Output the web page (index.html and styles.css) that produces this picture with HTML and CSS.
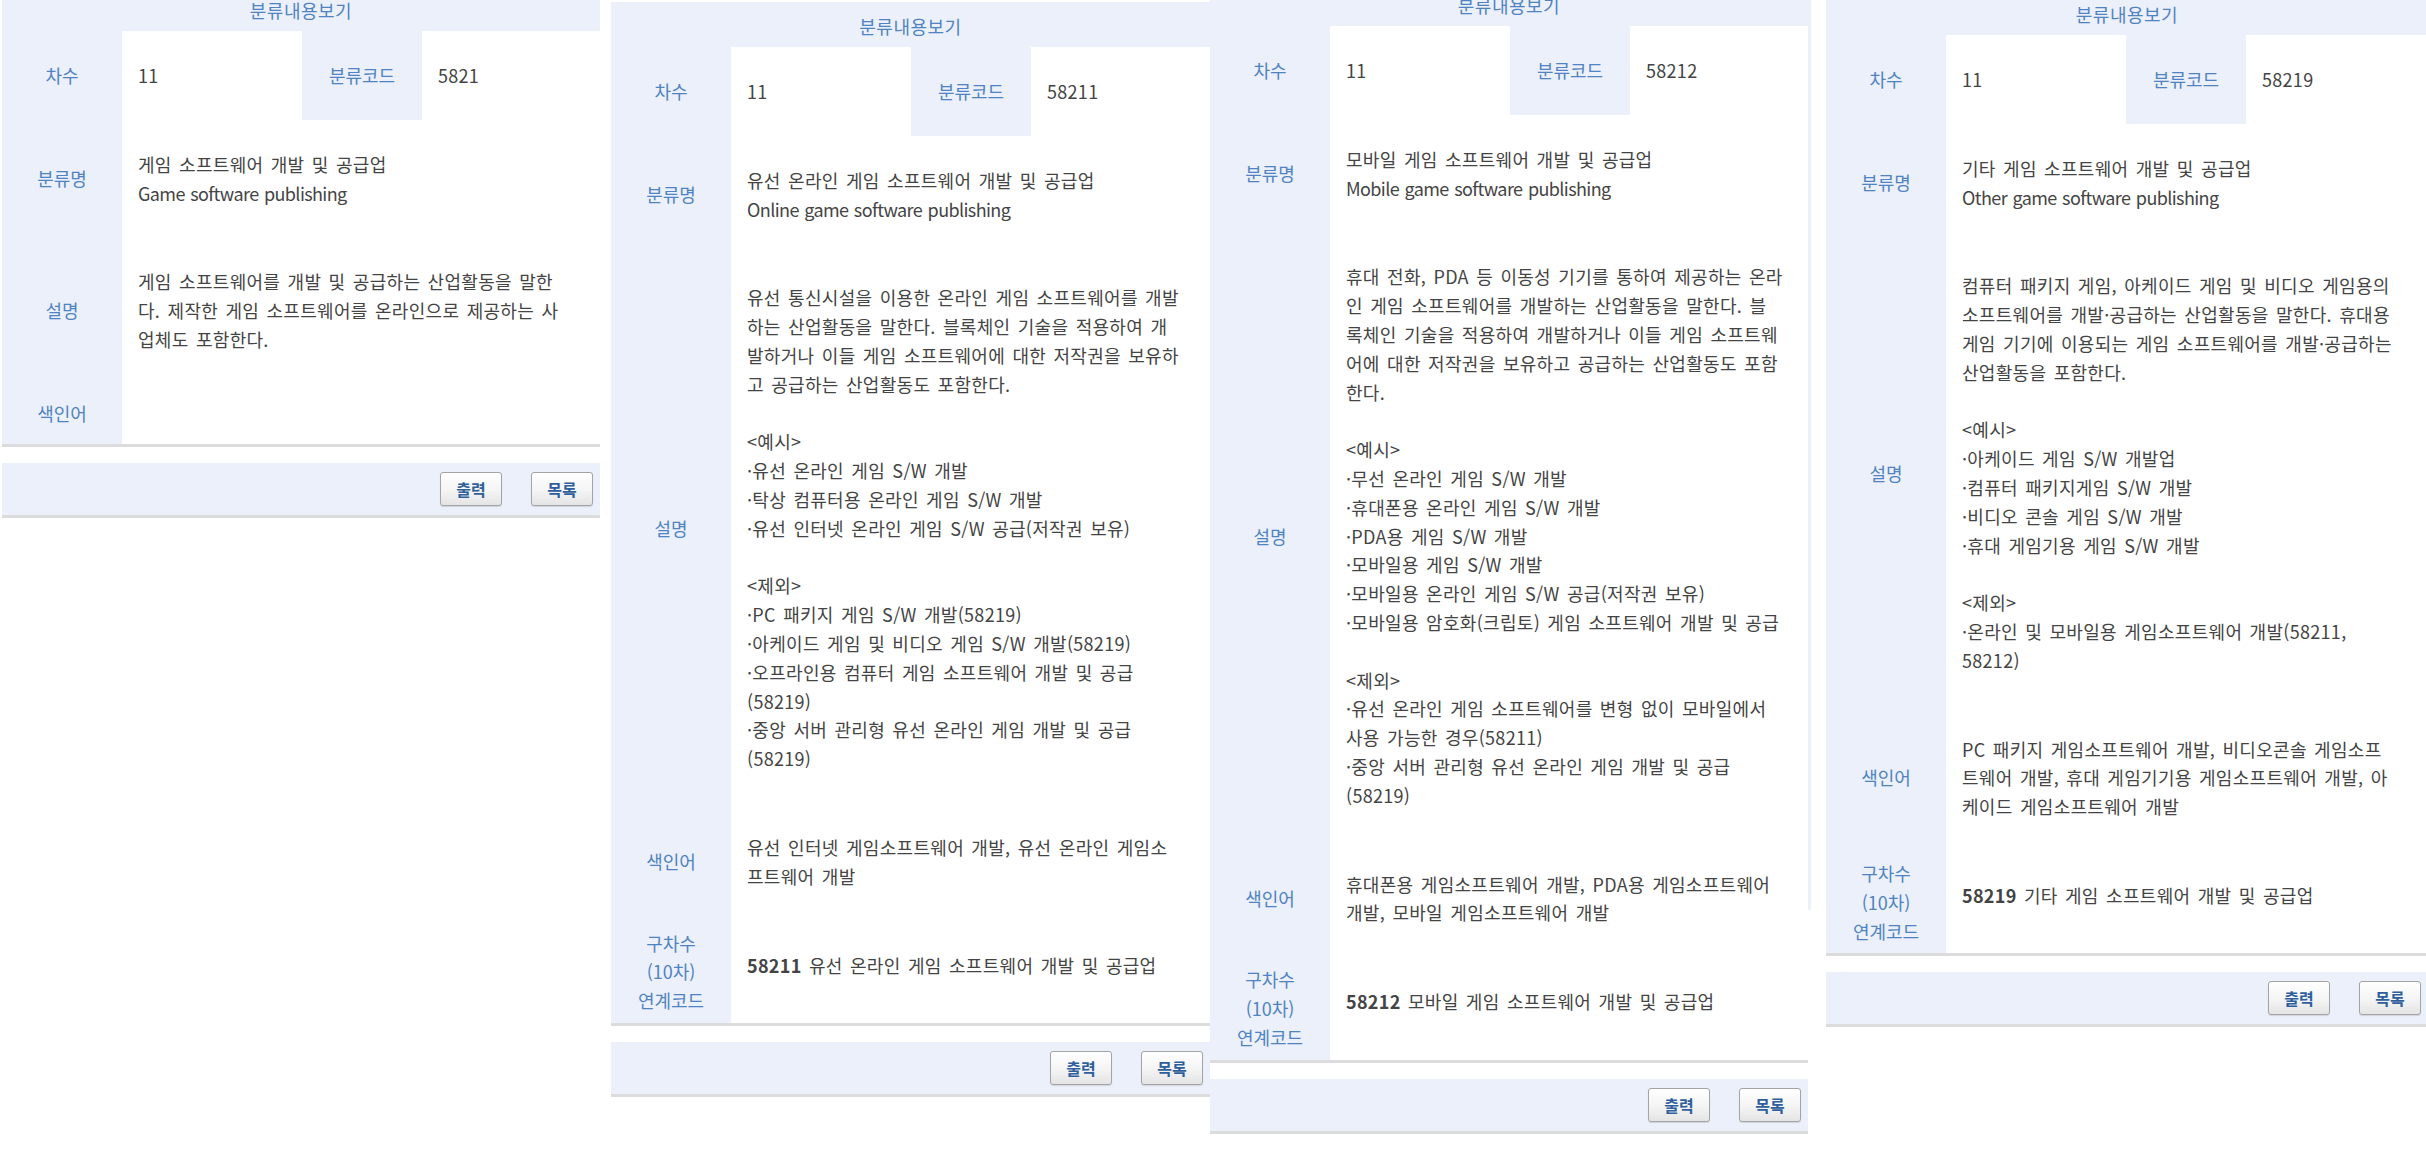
FILE: index.html
```html
<!DOCTYPE html>
<html lang="ko">
<head>
<meta charset="utf-8">
<title>분류내용보기</title>
<link rel="stylesheet" href="styles.css">
</head>
<body>
<div class="board">

  <section class="panel p1">
    <div class="sheet">
      <div class="title">분류내용보기</div>
      <div class="lab">차수</div><div class="val">11</div><div class="lab">분류코드</div><div class="val">5821</div>
      <div class="lab">분류명</div><div class="val wide">게임 소프트웨어 개발 및 공급업<br><span class="en">Game software publishing</span></div>
      <div class="lab">설명</div><div class="val wide">게임 소프트웨어를 개발 및 공급하는 산업활동을 말한<br>다. 제작한 게임 소프트웨어를 온라인으로 제공하는 사<br>업체도 포함한다.</div>
      <div class="lab">색인어</div><div class="val wide empty"></div>
    </div>
    <div class="bar"><button class="btn">출력</button><button class="btn">목록</button></div>
  </section>

  <section class="panel p2">
    <div class="sheet">
      <div class="title">분류내용보기</div>
      <div class="lab">차수</div><div class="val">11</div><div class="lab">분류코드</div><div class="val">58211</div>
      <div class="lab">분류명</div><div class="val wide">유선 온라인 게임 소프트웨어 개발 및 공급업<br><span class="en">Online game software publishing</span></div>
      <div class="lab">설명</div><div class="val wide">유선 통신시설을 이용한 온라인 게임 소프트웨어를 개발<br>하는 산업활동을 말한다. 블록체인 기술을 적용하여 개<br>발하거나 이들 게임 소프트웨어에 대한 저작권을 보유하<br>고 공급하는 산업활동도 포함한다.<br><br>&lt;예시&gt;<br>·유선 온라인 게임 S/W 개발<br>·탁상 컴퓨터용 온라인 게임 S/W 개발<br>·유선 인터넷 온라인 게임 S/W 공급(저작권 보유)<br><br>&lt;제외&gt;<br>·PC 패키지 게임 S/W 개발(58219)<br>·아케이드 게임 및 비디오 게임 S/W 개발(58219)<br>·오프라인용 컴퓨터 게임 소프트웨어 개발 및 공급<br>(58219)<br>·중앙 서버 관리형 유선 온라인 게임 개발 및 공급<br>(58219)</div>
      <div class="lab">색인어</div><div class="val wide">유선 인터넷 게임소프트웨어 개발, 유선 온라인 게임소<br>프트웨어 개발</div>
      <div class="lab">구차수<br>(10차)<br>연계코드</div><div class="val wide"><b class="code">58211</b> 유선 온라인 게임 소프트웨어 개발 및 공급업</div>
    </div>
    <div class="bar"><button class="btn">출력</button><button class="btn">목록</button></div>
  </section>

  <section class="panel p3">
    <div class="sheet">
      <div class="title">분류내용보기</div>
      <div class="lab">차수</div><div class="val">11</div><div class="lab">분류코드</div><div class="val">58212</div>
      <div class="lab">분류명</div><div class="val wide">모바일 게임 소프트웨어 개발 및 공급업<br><span class="en">Mobile game software publishing</span></div>
      <div class="lab">설명</div><div class="val wide">휴대 전화, PDA 등 이동성 기기를 통하여 제공하는 온라<br>인 게임 소프트웨어를 개발하는 산업활동을 말한다. 블<br>록체인 기술을 적용하여 개발하거나 이들 게임 소프트웨<br>어에 대한 저작권을 보유하고 공급하는 산업활동도 포함<br>한다.<br><br>&lt;예시&gt;<br>·무선 온라인 게임 S/W 개발<br>·휴대폰용 온라인 게임 S/W 개발<br>·PDA용 게임 S/W 개발<br>·모바일용 게임 S/W 개발<br>·모바일용 온라인 게임 S/W 공급(저작권 보유)<br>·모바일용 암호화(크립토) 게임 소프트웨어 개발 및 공급<br><br>&lt;제외&gt;<br>·유선 온라인 게임 소프트웨어를 변형 없이 모바일에서<br>사용 가능한 경우(58211)<br>·중앙 서버 관리형 유선 온라인 게임 개발 및 공급<br>(58219)</div>
      <div class="lab">색인어</div><div class="val wide">휴대폰용 게임소프트웨어 개발, PDA용 게임소프트웨어<br>개발, 모바일 게임소프트웨어 개발</div>
      <div class="lab">구차수<br>(10차)<br>연계코드</div><div class="val wide"><b class="code">58212</b> 모바일 게임 소프트웨어 개발 및 공급업</div>
    </div>
    <div class="bar"><button class="btn">출력</button><button class="btn">목록</button></div>
  </section>

  <section class="panel p4">
    <div class="sheet">
      <div class="title">분류내용보기</div>
      <div class="lab">차수</div><div class="val">11</div><div class="lab">분류코드</div><div class="val">58219</div>
      <div class="lab">분류명</div><div class="val wide">기타 게임 소프트웨어 개발 및 공급업<br><span class="en">Other game software publishing</span></div>
      <div class="lab">설명</div><div class="val wide">컴퓨터 패키지 게임, 아케이드 게임 및 비디오 게임용의<br>소프트웨어를 개발·공급하는 산업활동을 말한다. 휴대용<br>게임 기기에 이용되는 게임 소프트웨어를 개발·공급하는<br>산업활동을 포함한다.<br><br>&lt;예시&gt;<br>·아케이드 게임 S/W 개발업<br>·컴퓨터 패키지게임 S/W 개발<br>·비디오 콘솔 게임 S/W 개발<br>·휴대 게임기용 게임 S/W 개발<br><br>&lt;제외&gt;<br>·온라인 및 모바일용 게임소프트웨어 개발(58211,<br>58212)</div>
      <div class="lab">색인어</div><div class="val wide">PC 패키지 게임소프트웨어 개발, 비디오콘솔 게임소프<br>트웨어 개발, 휴대 게임기기용 게임소프트웨어 개발, 아<br>케이드 게임소프트웨어 개발</div>
      <div class="lab">구차수<br>(10차)<br>연계코드</div><div class="val wide"><b class="code">58219</b> 기타 게임 소프트웨어 개발 및 공급업</div>
    </div>
    <div class="bar"><button class="btn">출력</button><button class="btn">목록</button></div>
  </section>

</div>
</body>
</html>
```

FILE: styles.css
```css
html, body {
  margin: 0;
  padding: 0;
  background: #ffffff;
}

body {
  width: 2426px;
  height: 1152px;
  overflow: hidden;
  font-family: "Noto Sans CJK KR", "Noto Sans", sans-serif;
  font-size: 18px;
  line-height: 28.8px;
  color: #444444;
}

.board {
  display: flex;
  align-items: flex-start;
}

.panel {
  flex: none;
  position: relative;
}

.p1 { width: 598px; margin-left: 2px;  margin-top: -14px; }
.p2 { width: 599px; margin-left: 11px; margin-top: 2px; }
.p3 { width: 598px; margin-left: 0;    margin-top: -19px; margin-right: 3px; }
.p4 { width: 602px; margin-left: 15px; margin-top: -10px; }

.p3::after {
  content: "";
  position: absolute;
  top: 0;
  right: -3px;
  width: 3px;
  height: 929px;
  background: #ecf0fb;
}

.sheet {
  display: grid;
  grid-template-columns: 120px 180px 120px 1fr;
  background: #ecf0fb;
  border-bottom: 3px solid #dcdcdc;
}

.title {
  grid-column: 1 / -1;
  height: 45px;
  display: flex;
  align-items: center;
  justify-content: center;
  padding-top: 3px;
  box-sizing: border-box;
  color: #4f83c1;
  letter-spacing: 0.5px;
}

.lab {
  display: flex;
  align-items: center;
  justify-content: center;
  text-align: center;
  padding: 8px 0;
  color: #4f83c1;
}

.val {
  background: #ffffff;
  padding: 30px 16px;
  white-space: nowrap;
  letter-spacing: 0.3px;
  word-spacing: 2px;
  overflow: hidden;
}

.val.wide {
  grid-column: span 3;
}

.en {
  letter-spacing: -0.6px;
  word-spacing: 1px;
}

.code {
  font-weight: 700;
  color: #444444;
}

.bar {
  margin-top: 16px;
  height: 52px;
  background: #ecf0fb;
  border-bottom: 3px solid #dcdcdc;
  display: flex;
  justify-content: flex-end;
  align-items: center;
  gap: 29px;
  padding-right: 7px;
}

.btn {
  width: 62px;
  height: 34px;
  padding: 0;
  border: 1px solid #a4a4a4;
  border-radius: 3px;
  background: linear-gradient(#ffffff, #f4f4f4 55%, #e4e4e4);
  box-shadow: 0 1px 1px rgba(0, 0, 0, 0.12);
  font-family: "Noto Sans CJK KR", "Noto Sans", sans-serif;
  font-size: 16px;
  font-weight: 700;
  color: #2f5e9c;
  line-height: 32px;
}
```
